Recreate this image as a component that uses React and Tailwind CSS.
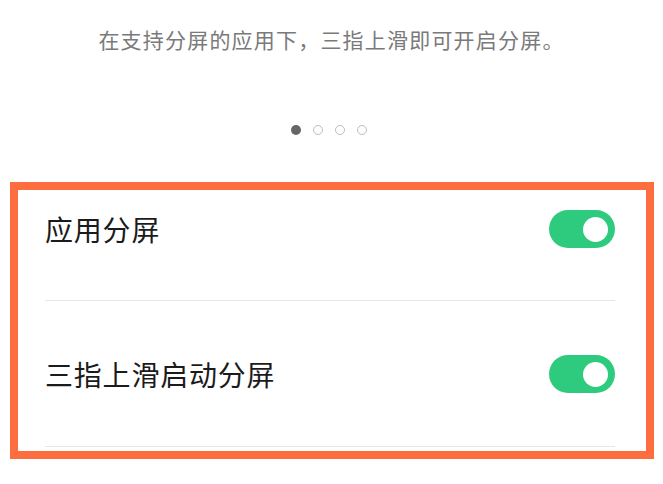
import React from "react";

function Toggle() {
  return (
    <div className="w-[66px] h-[38px] rounded-full bg-[#2ecb7e] flex items-center justify-end pr-[7px]">
      <div className="w-[25px] h-[25px] rounded-full bg-white" />
    </div>
  );
}

export default function App() {
  const font = { fontFamily: '"Noto Sans CJK SC", "Noto Sans", sans-serif' };
  return (
    <div className="w-[663px] h-[484px] bg-white overflow-hidden" style={font}>
      <div className="h-[182px] flex flex-col items-center pt-[24px]">
        <p className="text-[21px] leading-[30px] text-[#7a7a7a] tracking-[1.2px]">
          在支持分屏的应用下，三指上滑即可开启分屏。
        </p>
        <div className="mt-[71px] mr-[6px] flex items-center gap-[12px]">
          <span className="w-[10px] h-[10px] rounded-full bg-[#666666]" />
          <span className="w-[10px] h-[10px] rounded-full border-[1.5px] border-[#bdbdbd]" />
          <span className="w-[10px] h-[10px] rounded-full border-[1.5px] border-[#bdbdbd]" />
          <span className="w-[10px] h-[10px] rounded-full border-[1.5px] border-[#bdbdbd]" />
        </div>
      </div>
      <div className="ml-[10px] w-[644px] h-[277px] border-[8px] border-[#fd6d3f]">
        <div className="pl-[27px] pr-[31px]">
          <div className="pt-[19px] pb-[51px] border-b border-[#e6e6e6]">
            <div className="h-[40px] flex items-center justify-between">
              <span className="text-[28px] leading-none text-[#1b1b1b] tracking-[0.8px]">应用分屏</span>
              <Toggle />
            </div>
          </div>
          <div className="pt-[53px] pb-[52px] border-b border-[#e6e6e6]">
            <div className="h-[40px] flex items-center justify-between">
              <span className="text-[28px] leading-none text-[#1b1b1b] tracking-[0.8px]">三指上滑启动分屏</span>
              <Toggle />
            </div>
          </div>
        </div>
      </div>
    </div>
  );
}
